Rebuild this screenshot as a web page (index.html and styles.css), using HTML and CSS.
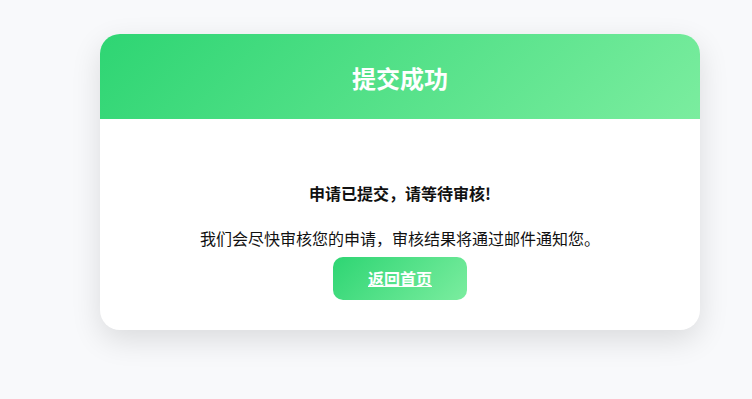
FILE: index.html
```html
<!DOCTYPE html>
<html lang="zh-CN">
<head>
<meta charset="utf-8">
<link rel="stylesheet" href="styles.css">
</head>
<body>
<div class="page">
  <div class="card">
    <div class="card-header">
      <h1 class="title">提交成功</h1>
    </div>
    <div class="card-body">
      <p class="lead"><strong>申请已提交，请等待审核!</strong></p>
      <p class="desc">我们会尽快审核您的申请，审核结果将通过邮件通知您。</p>
      <a class="btn" href="#">返回首页</a>
    </div>
  </div>
</div>
</body>
</html>
```
FILE: styles.css
```css
html {
  background: #f8f9fb;
}
body {
  margin: 0;
  padding: 0;
  min-height: 399px;
  font-family: "Noto Sans CJK SC", "Noto Sans", sans-serif;
  color: #111;
}
.page {
  padding: 34px 0 0 100px;
}
.card {
  width: 600px;
  background: #fff;
  border-radius: 20px;
  overflow: hidden;
  box-shadow: 0 10px 30px rgba(0, 0, 0, 0.12);
}
.card-header {
  background: linear-gradient(135deg, #2ed573, #7bed9f);
  height: 85px;
  display: flex;
  align-items: center;
  justify-content: center;
}
.title {
  margin: 0;
  color: #fff;
  font-size: 24px;
  font-weight: 700;
  line-height: 34px;
  position: relative;
  top: 1px;
}
.card-body {
  padding: 63px 0 30px;
  display: flex;
  flex-direction: column;
  align-items: center;
  text-align: center;
}
.lead {
  margin: 0;
  font-size: 16px;
  line-height: 23px;
}
.desc {
  margin: 22px 0 0;
  font-size: 16px;
  line-height: 23px;
}
.btn {
  margin-top: 7px;
  display: block;
  padding: 11px 35px;
  line-height: 21px;
  font-size: 16px;
  font-weight: 700;
  color: #fff;
  background: linear-gradient(135deg, #2ed573, #7bed9f);
  border-radius: 10px;
  text-decoration: underline;
}
```
